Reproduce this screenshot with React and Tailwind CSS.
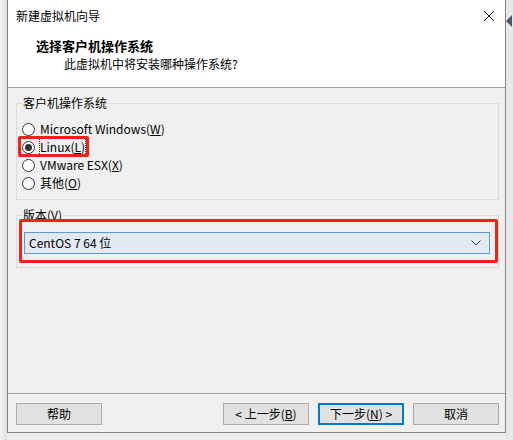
import React from "react";

const font = { fontFamily: '"Noto Sans CJK SC", "Noto Sans", sans-serif' };

function Radio({ checked, children, focus }) {
  return (
    <div className="flex items-center h-[18px]">
      <span className="w-[13px] h-[13px] rounded-full border border-[#333333] bg-white flex items-center justify-center shrink-0">
        {checked && <span className="w-[7px] h-[7px] rounded-full bg-[#333333]" />}
      </span>
      <span
        className={
          "ml-[5px] text-[12px] leading-[16px] text-black " +
          (focus ? "outline outline-1 outline-dotted outline-[#333] px-[0px]" : "")
        }
      >
        {children}
      </span>
    </div>
  );
}

function Btn({ children, primary }) {
  return (
    <button
      className={
        "w-[86px] h-[22px] bg-[#e1e1e1] text-[12px] text-black flex items-center justify-center " +
        (primary ? "border-2 border-[#0078d7]" : "border border-[#adadad]")
      }
    >
      {children}
    </button>
  );
}

export default function App() {
  return (
    <div className="w-[513px] h-[440px] bg-[#ededed] flex overflow-hidden" style={font}>
      <div className="w-[7px] h-full bg-gradient-to-r from-[#f4f4f4] to-[#dedede]" />
      <div className="w-[499px] h-[433px] border border-t-0 border-[#838383] bg-[#f0f0f0] flex flex-col">
        {/* title bar */}
        <div className="h-[31px] bg-white flex items-center justify-between pl-[8px] pr-[8px]">
          <span className="text-[12px] text-black">新建虚拟机向导</span>
          <svg width="12" height="12" viewBox="0 0 12 12" className="mr-[2px]">
            <path d="M1 1 L11 11 M11 1 L1 11" stroke="#111" strokeWidth="1" />
          </svg>
        </div>
        {/* header */}
        <div className="h-[57px] bg-white border-b border-[#a0a0a0] pt-[6px]">
          <div className="pl-[28px] text-[13px] leading-[18px] font-bold text-black">选择客户机操作系统</div>
          <div className="pl-[56px] text-[12px] leading-[18px] text-black">此虚拟机中将安装哪种操作系统?</div>
        </div>
        {/* body */}
        <div className="flex-1 flex flex-col">
          <fieldset className="mt-[7px] ml-[8px] mr-[6px] border border-[#dcdcdc] pl-[5px] pt-[9px] pb-[7px]">
            <legend className="px-[1px] text-[12px] leading-[16px] text-black">客户机操作系统</legend>
            <div className="relative">
              <Radio>
                Microsoft Windows(<span className="underline">W</span>)
              </Radio>
              <Radio checked focus>
                Linux(<span className="underline">L</span>)
              </Radio>
              <Radio>
                VMware ESX(<span className="underline">X</span>)
              </Radio>
              <Radio>
                其他(<span className="underline">O</span>)
              </Radio>
              <div className="absolute left-[-4px] top-[16px] w-[71px] h-[21px] border-[3px] border-[#f0201a] rounded-[2px]" />
            </div>
          </fieldset>
          <div className="relative mt-[7px] ml-[8px] mr-[6px]">
            <fieldset className="border border-[#dcdcdc] pl-[7px] pr-[8px] pt-[9px] pb-[13px]">
              <legend className="ml-[-2px] px-[1px] text-[12px] leading-[16px] text-black">
                版本(<span className="underline">V</span>)
              </legend>
              <div className="h-[22px] bg-[#e3e9f1] border border-[#5b9bd5] flex items-center justify-between pl-[4px] pr-[8px]">
                <span className="text-[12px] text-black">CentOS 7 64 位</span>
                <svg width="10" height="6" viewBox="0 0 10 6">
                  <path d="M0.5 0.5 L5 5 L9.5 0.5" stroke="#444" strokeWidth="1" fill="none" />
                </svg>
              </div>
            </fieldset>
            <div className="absolute left-[3px] right-[1px] top-[12px] bottom-[5px] border-[3px] border-[#f0201a] rounded-[2px]" />
          </div>
          <div className="flex-1" />
          <div className="border-t border-[#a0a0a0] pt-[9px] pb-[7px] pl-[8px] pr-[6px] flex">
            <Btn>帮助</Btn>
            <div className="flex-1" />
            <div className="flex gap-[9px]">
              <Btn>
                &lt; 上一步(<span className="underline">B</span>)
              </Btn>
              <Btn primary>
                下一步(<span className="underline">N</span>) &gt;
              </Btn>
              <Btn>取消</Btn>
            </div>
          </div>
        </div>
      </div>
      <div className="flex-1 h-full bg-[#e8e8e8] flex flex-col">
        <div className="mt-[15px] w-0 h-0 border-t-[6px] border-b-[6px] border-r-[6px] border-t-transparent border-b-transparent border-r-[#4a5a6a]" />
      </div>
    </div>
  );
}
